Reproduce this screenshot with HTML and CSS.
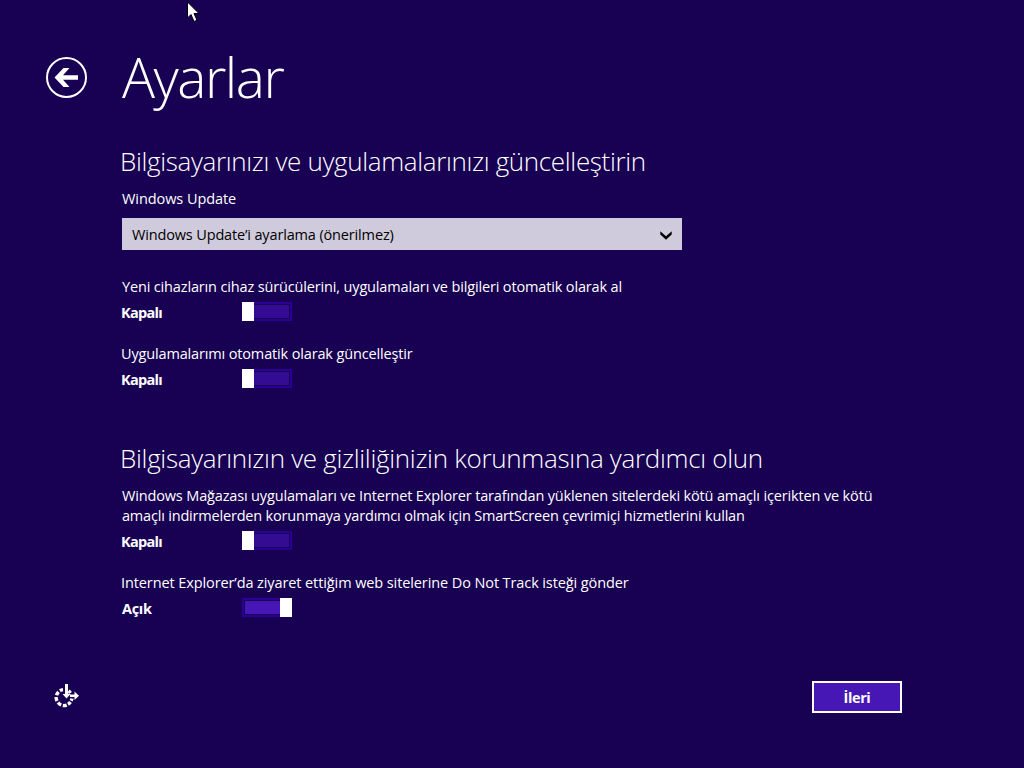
FILE: index.html
```html
<!DOCTYPE html>
<html lang="tr">
  <head>
    <meta charset="UTF-8" />
    <meta name="viewport" content="width=device-width, initial-scale=1.0" />
    <title>Ayarlar</title>
    <link rel="stylesheet" href="styles.css">
  </head>
  <body>
    <header class="header">
      <button class="backBtn" aria-label="Geri">
        <svg width="42" height="42" viewBox="0 0 42 42">
          <circle cx="20.500" cy="21.500" r="19.500" fill="none" stroke="#fff" stroke-width="2" />
          <path d="M8.500 21.500L17.500 12H23.500L17 19.200H32V23.800H17L23.500 31H17.500Z" fill="#fff" />
        </svg>
      </button>
      <h1 class="topTitle">Ayarlar</h1>
    </header>

    <main class="settings">
      <section class="group groupUpdate">
        <h2 class="groupTitle">Bilgisayarınızı ve uygulamalarınızı güncelleştirin</h2>
        <p class="label updateLabel">Windows Update</p>
        <div class="select">
          <span>Windows Update’i ayarlama (önerilmez)</span>
          <svg width="12" height="9" viewBox="0 0 12 9">
            <path d="M.3 .3L6 5.300L11.700 .3V3.500L6 8.800L.3 3.500Z" fill="#000" />
          </svg>
        </div>
        <div class="option">
          <p class="label drivers">Yeni cihazların cihaz sürücülerini, uygulamaları ve bilgileri otomatik olarak al</p>
          <div class="row">
            <span class="state">Kapalı</span>
            <span class="toggle"><span class="fill"></span><span class="knob"></span></span>
          </div>
        </div>
        <div class="option">
          <p class="label apps">Uygulamalarımı otomatik olarak güncelleştir</p>
          <div class="row">
            <span class="state">Kapalı</span>
            <span class="toggle"><span class="fill"></span><span class="knob"></span></span>
          </div>
        </div>
      </section>

      <section class="group groupPrivacy">
        <h2 class="groupTitle privacyTitle">Bilgisayarınızın ve gizliliğinizin korunmasına yardımcı olun</h2>
        <div class="option">
          <p class="label">
            <span class="line1">Windows Mağazası uygulamaları ve Internet Explorer tarafından yüklenen sitelerdeki kötü amaçlı içerikten ve kötü</span><br />
            <span class="line2">amaçlı indirmelerden korunmaya yardımcı olmak için SmartScreen çevrimiçi hizmetlerini kullan</span>
          </p>
          <div class="row">
            <span class="state">Kapalı</span>
            <span class="toggle"><span class="fill"></span><span class="knob"></span></span>
          </div>
        </div>
        <div class="option">
          <p class="label track">Internet Explorer’da ziyaret ettiğim web sitelerine Do Not Track isteği gönder</p>
          <div class="row">
            <span class="state stateOn">Açık</span>
            <span class="toggle on"><span class="fill"></span><span class="knob"></span></span>
          </div>
        </div>
      </section>
    </main>

    <footer class="footer">
      <button class="accessBtn" aria-label="Erişim kolaylığı">
        <svg width="26" height="24" viewBox="0 0 26 24">
          <g fill="none" stroke="#fff" stroke-width="3.400">
            <path d="M5.900 6.700A8 8 0 0 1 9 5.600" />
            <path d="M2.500 11.200A8 8 0 0 1 4.600 7.900" />
            <path d="M3 17A8 8 0 0 1 2.100 13" />
            <path d="M7.200 21A8 8 0 0 1 4 18.500" />
            <path d="M12.700 21.100A8 8 0 0 1 8.800 21.500" />
            <path d="M16.500 18A8 8 0 0 1 14 20.300" />
            <path d="M17.900 14.500A8 8 0 0 1 17.200 16.700" />
            <path d="M14.500 7A8 8 0 0 1 16.500 9" />
          </g>
          <path d="M11 0H14V10H16.500L12.500 14.500L8.500 10H11ZM16 10.500H20.500V7.500L25 11.800L20.500 16V13H16Z" fill="#fff" />
        </svg>
      </button>
      <button class="nextBtn">İleri</button>
    </footer>

    <svg class="cursor" width="13" height="21" viewBox="0 0 13 21">
      <path d="M.5 1V17L4 13.500L7 20.500L10 19.300L7 12.500H12Z" fill="#fff" stroke="#000" stroke-width="1" />
    </svg>
  </body>
</html>
```

FILE: styles.css
```css
* {
  box-sizing: border-box;
}
body {
  font-family: "Open Sans", "Noto Sans", sans-serif;
  font-size: 14.5px;
  line-height: 20px;
  letter-spacing: -0.15px;
  margin: 0;
  width: 1024px;
  height: 768px;
  overflow: hidden;
  color: white;
  background-color: #180052;
}
h1,
h2,
p {
  margin: 0;
  white-space: nowrap;
}
button {
  font-family: inherit;
  color: white;
  padding: 0;
  border: none;
  background: none;
  cursor: pointer;
}
svg {
  display: block;
}
.header {
  display: flex;
  height: 139px;
  padding-left: 46px;
}
.backBtn {
  width: 42px;
  height: 42px;
  margin-top: 56px;
}
.topTitle {
  font-size: 55px;
  font-weight: 300;
  line-height: 76px;
  letter-spacing: -1.5px;
  margin: 39px 0 0 34px;
}
.settings {
  padding-left: 122px;
}
.groupUpdate {
  height: 297px;
}
.groupPrivacy {
  height: 245px;
}
.groupTitle {
  font-size: 26px;
  font-weight: 300;
  line-height: 44px;
  letter-spacing: -0.34px;
  margin: 0 0 6px -2px;
}
.privacyTitle {
  letter-spacing: -0.3px;
}
.updateLabel {
  letter-spacing: -0.07px;
}
.select {
  display: flex;
  align-items: center;
  justify-content: space-between;
  width: 560px;
  height: 32px;
  margin: 9px 0 27px;
  padding: 2px 10px 0;
  color: black;
  background-color: #d0cbdc;
}
.apps {
  margin-left: -1px;
  letter-spacing: -0.15px;
}
.line2 {
  letter-spacing: -0.19px;
}
.track {
  margin-left: -1px;
  letter-spacing: -0.1px;
}
.option {
  margin-bottom: 21px;
}
.row {
  display: flex;
  height: 26px;
  padding-top: 5px;
}
.state {
  width: 121px;
  margin-left: -1px;
  padding-top: 1px;
  font-weight: 700;
  letter-spacing: -0.7px;
}
.stateOn {
  width: 120px;
  margin-left: 0;
  letter-spacing: -0.3px;
}
.toggle {
  display: flex;
  width: 50px;
  height: 19px;
}
.fill {
  flex: 1;
  padding: 1px;
  border: 2px solid #2c0098;
  border-left: none;
  background: #330c93 content-box;
  padding-left: 0;
}
.knob {
  width: 12px;
  order: -1;
  background-color: white;
}
.on .fill {
  border-left: 2px solid #2c0098;
  border-right: none;
  padding: 1px 0 1px 1px;
  background-color: #4617b4;
}
.on .knob {
  order: 1;
}
.footer {
  display: flex;
  justify-content: space-between;
  width: 902px;
  padding-left: 54px;
}
.accessBtn {
  width: 26px;
  height: 24px;
  margin-top: 3px;
}
.nextBtn {
  width: 90px;
  height: 32px;
  font-size: 14.5px;
  font-weight: 700;
  letter-spacing: -0.4px;
  border: 2px solid white;
  background-color: #4617b4;
}
.cursor {
  position: absolute;
  left: 187px;
  top: 1px;
}
```
